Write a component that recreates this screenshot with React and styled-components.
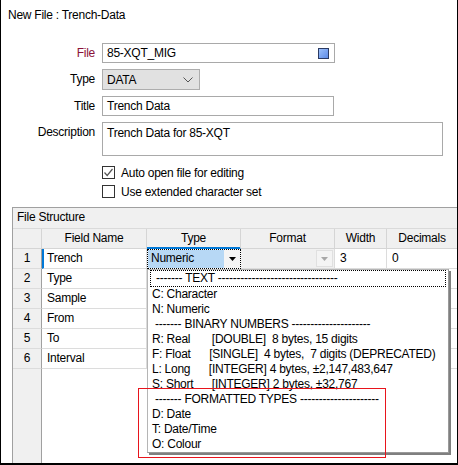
import React from "react";
import styled, { createGlobalStyle } from "styled-components";

const GlobalStyle = createGlobalStyle`
  html, body {
    margin: 0;
    padding: 0;
    background: #fff;
  }
  body {
    font-family: "Segoe UI", "Liberation Sans", Arial, sans-serif;
    font-size: 12px;
    letter-spacing: -0.25px;
    color: #000;
  }
  * { box-sizing: border-box; }
`;

const Window = styled.div`
  position: relative;
  width: 458px;
  height: 465px;
  border-left: 1px solid #000;
  border-right: 1px solid #000;
  border-bottom: 2px solid #000;
  background: #fff;
  overflow: hidden;
  display: flex;
  flex-direction: column;
`;

const Heading = styled.div`
  height: 31px;
  padding: 7px 0 0 7px;
  line-height: 16px;
`;

const Form = styled.div`
  display: grid;
  grid-template-columns: 87px auto;
  column-gap: 7px;
  row-gap: 6px;
  padding: 12px 0 0 7px;
  justify-items: start;
`;

const Label = styled.label`
  justify-self: end;
  line-height: ${(p) => (p.$top ? "16px" : "20px")};
  padding-top: ${(p) => (p.$top ? "2px" : "0")};
  color: ${(p) => (p.$accent ? "#8b1238" : "#000")};
`;

const TextBox = styled.div`
  position: relative;
  width: ${(p) => p.$w}px;
  height: ${(p) => p.$h || 20}px;
  border: 1px solid #a9a9a9;
  background: #fff;
  padding: ${(p) => (p.$multi ? "2px 4px" : "0 4px")};
  line-height: ${(p) => (p.$multi ? "16px" : "18px")};
`;

const FileIcon = styled.span`
  position: absolute;
  right: 5px;
  top: 4px;
  width: 11px;
  height: 11px;
  border: 1px solid #2b3a62;
  background: linear-gradient(135deg, #9cc0fb 0%, #5d8ae6 100%);
`;

const Select = styled.div`
  width: ${(p) => p.$w}px;
  height: 21px;
  border: 1px solid #adadad;
  background: #e1e1e1;
  display: flex;
  align-items: center;
  justify-content: space-between;
  padding: 0 6px 0 4px;
`;

const Checks = styled.div`
  grid-column: 2;
  display: flex;
  flex-direction: column;
  gap: 6px;
  padding-top: 4px;
`;

const CheckRow = styled.div`
  display: flex;
  align-items: center;
  gap: 6px;
  height: 13px;
`;

const Box = styled.span`
  width: 13px;
  height: 13px;
  border: 1px solid #333;
  background: #fff;
  display: flex;
  align-items: center;
  justify-content: center;
`;

const Group = styled.div`
  margin: 9px 0 0 11px;
  width: 460px;
  flex: 1;
  border-left: 1px solid #a0a0a0;
  border-top: 1px solid #a0a0a0;
  display: flex;
  flex-direction: column;
`;

const GroupTitle = styled.div`
  height: 21px;
  background: #f0f0f0;
  border-bottom: 1px solid #dadada;
  padding: 0 0 0 4px;
  line-height: 19px;
`;

const cols = "29px 105px 94px 94px 52px 71px 20px";

const Row = styled.div`
  display: grid;
  grid-template-columns: ${cols};
  height: 20px;
`;

const HeadCell = styled.div`
  background: #f0f0f0;
  border-right: 1px solid #d5d5d5;
  border-bottom: 1px solid ${(p) => (p.$active ? "#0078d7" : "#d5d5d5")};
  box-shadow: ${(p) => (p.$active ? "inset 0 -1px 0 #0078d7" : "none")};
  text-align: center;
  line-height: 19px;
`;

const RowHead = styled.div`
  background: #f0f0f0;
  border-right: 1px solid #a0a0a0;
  border-bottom: 1px solid #dcdcdc;
  text-align: center;
  line-height: 19px;
`;

const Cell = styled.div`
  position: relative;
  background: ${(p) => (p.$dim ? "#f0f0f0" : "#fff")};
  border-right: 1px solid #dcdcdc;
  border-bottom: 1px solid #dcdcdc;
  border-left: ${(p) => (p.$current ? "2px solid #0078d7" : "none")};
  padding-left: ${(p) => (p.$current ? "3px" : "5px")};
  line-height: 19px;
`;

const Editor = styled.div`
  position: relative;
  display: flex;
  border: 1px dotted #000;
`;

const EditorText = styled.div`
  flex: 1;
  background: #b7d8f5;
  padding-left: 3px;
  line-height: 17px;
`;

const EditorButton = styled.div`
  width: 16px;
  display: flex;
  align-items: center;
  justify-content: center;
  background: #f4f4f4;
`;

const ComboButton = styled.div`
  position: absolute;
  right: 1px;
  top: 1px;
  bottom: 1px;
  width: 17px;
  border: 1px solid #e0e0e0;
  background: #f4f4f4;
  display: flex;
  align-items: center;
  justify-content: center;
`;

const Filler = styled.div`
  flex: 1;
  display: grid;
  grid-template-columns: ${cols};
`;

const FillerHead = styled.div`
  background: #f0f0f0;
  border-right: 1px solid #a0a0a0;
`;

const DropList = styled.div`
  position: absolute;
  left: -1px;
  top: 19px;
  width: 302px;
  height: 184px;
  z-index: 5;
  background: #fff;
  border: 1px solid #b5b5b5;
  border-right-color: #9a9a9a;
  border-bottom-color: #9a9a9a;
  box-shadow: 2px 2px 0 #7f7f7f;
  padding: 0 2px;
`;

const DropItem = styled.div`
  height: ${(p) => (p.$focus ? 17 : 15)}px;
  line-height: ${(p) => (p.$focus ? 17 : 15)}px;
  padding-left: 2px;
  white-space: pre;
  border: ${(p) => (p.$focus ? "1px dotted #000" : "none")};
  line-height: ${(p) => (p.$focus ? "15px" : "15px")};
`;

const Annotation = styled.div`
  position: absolute;
  left: 137px;
  top: 388px;
  width: 248px;
  height: 70px;
  border: 1.5px solid #e8141c;
  pointer-events: none;
  z-index: 10;
`;

const Caret = ({ color = "#000" }) => (
  <svg width="7" height="4" viewBox="0 0 7 4">
    <path d="M0 0h7L3.5 4z" fill={color} />
  </svg>
);

const Chevron = () => (
  <svg width="10" height="6" viewBox="0 0 10 6">
    <path d="M0.5 0.5L5 5L9.5 0.5" fill="none" stroke="#555" strokeWidth="1" />
  </svg>
);

const Tick = () => (
  <svg width="11" height="11" viewBox="0 0 11 11">
    <path d="M1.5 5.5L4.2 8.5L9.5 2" fill="none" stroke="#555" strokeWidth="1.2" />
  </svg>
);

const fields = ["Trench", "Type", "Sample", "From", "To", "Interval"];

const types = [
  " ------- TEXT --------------------------------",
  "C: Character",
  "N: Numeric",
  " ------- BINARY NUMBERS ---------------------",
  "R: Real       [DOUBLE]  8 bytes, 15 digits",
  "F: Float      [SINGLE]  4 bytes,  7 digits (DEPRECATED)",
  "L: Long      [INTEGER] 4 bytes, ±2,147,483,647",
  "S: Short      [INTEGER] 2 bytes, ±32,767",
  " ------- FORMATTED TYPES ---------------------",
  "D: Date",
  "T: Date/Time",
  "O: Colour",
];

function App() {
  return (
    <>
      <GlobalStyle />
      <Window>
        <Heading>New File : Trench-Data</Heading>
        <Form>
          <Label $accent>File</Label>
          <TextBox $w={233}>
            85-XQT_MIG
            <FileIcon />
          </TextBox>
          <Label>Type</Label>
          <Select $w={98}>
            <span>DATA</span>
            <Chevron />
          </Select>
          <Label>Title</Label>
          <TextBox $w={232}>Trench Data</TextBox>
          <Label $top>Description</Label>
          <TextBox $w={341} $h={34} $multi>
            Trench Data for 85-XQT
          </TextBox>
          <Checks>
            <CheckRow>
              <Box>
                <Tick />
              </Box>
              Auto open file for editing
            </CheckRow>
            <CheckRow>
              <Box />
              Use extended character set
            </CheckRow>
          </Checks>
        </Form>

        <Group>
          <GroupTitle>File Structure</GroupTitle>
          <Row>
            <HeadCell />
            <HeadCell>Field Name</HeadCell>
            <HeadCell $active>Type</HeadCell>
            <HeadCell>Format</HeadCell>
            <HeadCell>Width</HeadCell>
            <HeadCell>Decimals</HeadCell>
            <HeadCell />
          </Row>
          {fields.map((name, i) => (
            <Row key={name}>
              <RowHead>{i + 1}</RowHead>
              <Cell $current={i === 0}>{name}</Cell>
              {i === 0 ? (
                <Editor>
                  <EditorText>Numeric</EditorText>
                  <EditorButton>
                    <Caret />
                  </EditorButton>
                  <DropList>
                    {types.map((t, k) => (
                      <DropItem key={k} $focus={k === 0}>
                        {t}
                      </DropItem>
                    ))}
                  </DropList>
                </Editor>
              ) : (
                <Cell />
              )}
              <Cell $dim={i === 0}>
                {i === 0 && (
                  <ComboButton>
                    <Caret color="#a8a8a8" />
                  </ComboButton>
                )}
              </Cell>
              <Cell>{i === 0 ? "3" : ""}</Cell>
              <Cell>{i === 0 ? "0" : ""}</Cell>
              <Cell />
            </Row>
          ))}
          <Filler>
            <FillerHead />
          </Filler>
        </Group>
        <Annotation />
      </Window>
    </>
  );
}

export default App;
